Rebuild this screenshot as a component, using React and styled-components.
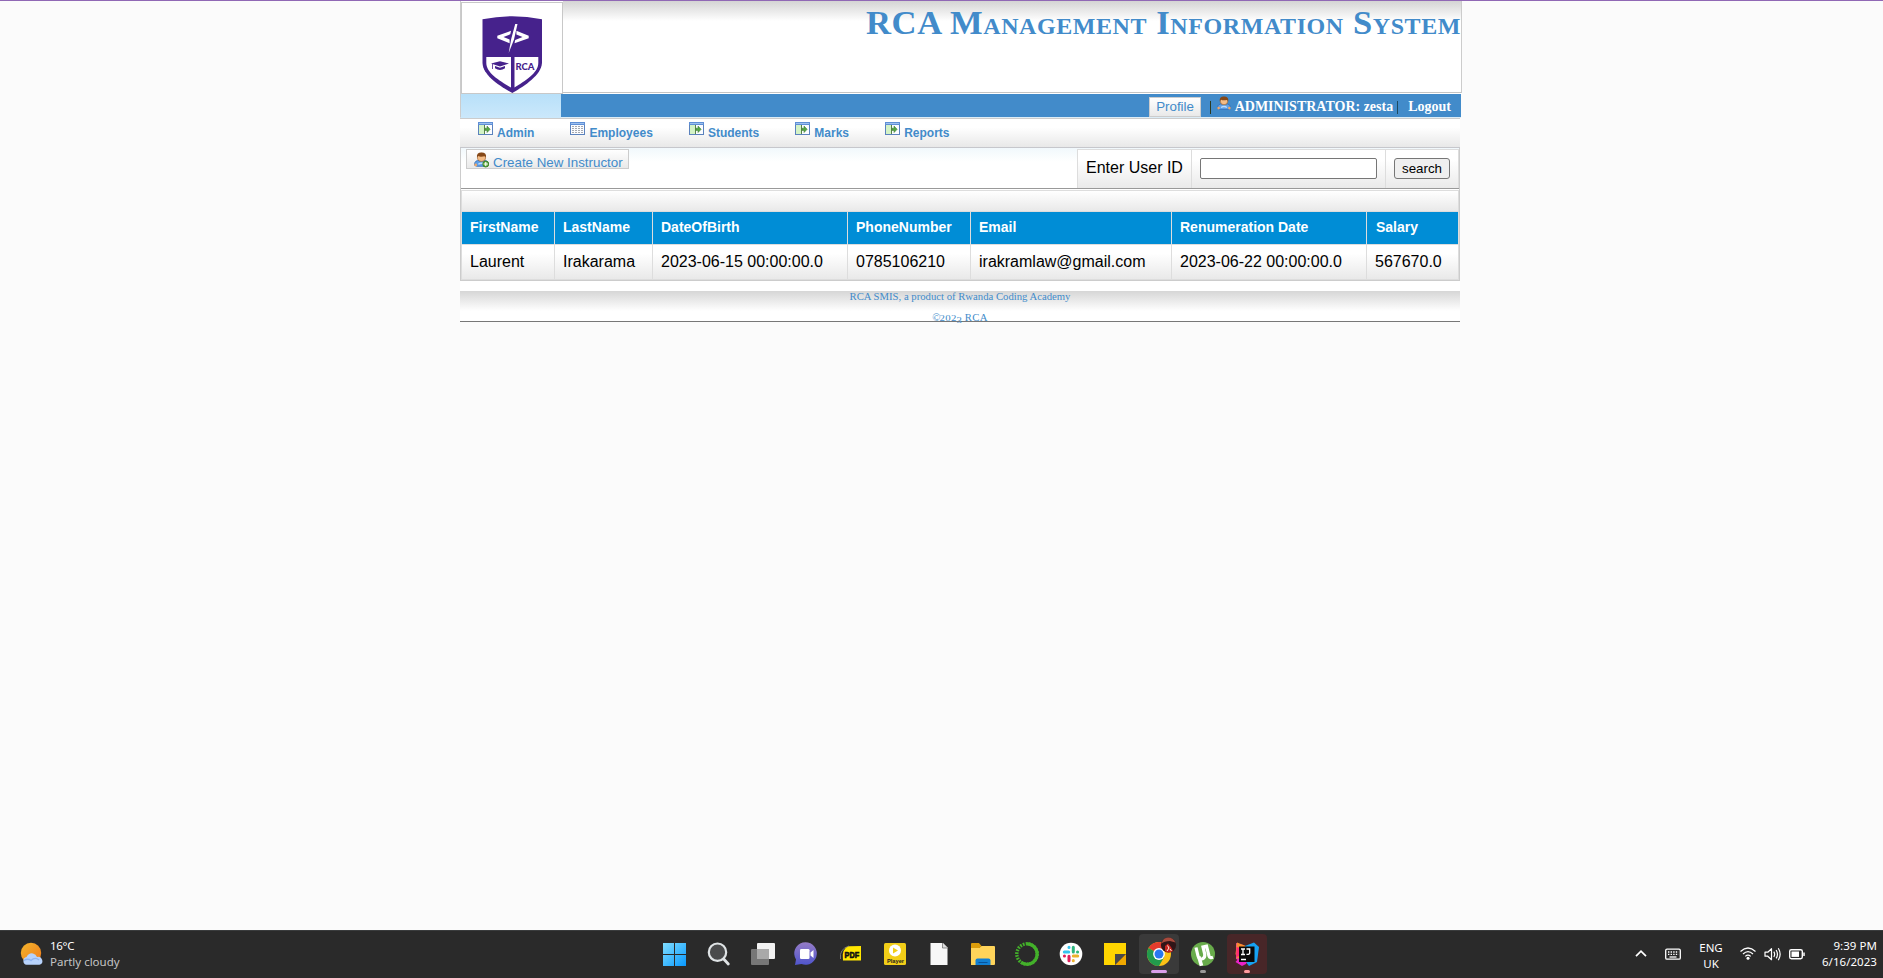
import React from "react";
import styled, { createGlobalStyle } from "styled-components";

const Global = createGlobalStyle`
  * { box-sizing: border-box; }
  html, body { margin: 0; padding: 0; }
  body { background: #fbfbfb; font-family: "Liberation Sans", Arial, sans-serif; overflow: hidden; }
`;

const Screen = styled.div`
  display: flex;
  flex-direction: column;
  height: 978px;
  width: 1883px;
  border-top: 1px solid #9068b5;
`;
const Page = styled.main`
  flex: 1;
  margin-left: 460px;
  width: 1002px;
`;

/* Header */
const Header = styled.header`
  display: flex;
  justify-content: space-between;
  height: 93px;
  border-left: 1px solid #ccc;
  background: #fff;
`;
const LogoBox = styled.div`
  width: 102px;
  height: 92px;
  margin-top: 1px;
  border: 1px solid #c8c8c8;
  background: #fff;
  svg { display: block; }
`;
const Banner = styled.div`
  flex: 1;
  height: 92px;
  border-right: 1px solid #ccc;
  border-bottom: 1px solid #c4c4c4;
  background: linear-gradient(#d4d4d4, #fff 20px);
  text-align: right;
`;
const Title = styled.h1`
  margin: 0;
  height: 42px;
  font: bold 34.6px/42px "Liberation Serif", "Times New Roman", serif;
  font-variant: small-caps;
  letter-spacing: 0.58px;
  color: #428bca;
  white-space: nowrap;
`;

/* User bar */
const UserBar = styled.div`
  display: flex;
  height: 24px;
  width: 1001px;
  border-left: 1px solid #ccc;
  border-bottom: 1px solid #dcecf6;
  background: #428bca;
`;
const UserBarAccent = styled.div`
  width: 100px;
  height: 24px;
  background: linear-gradient(#b8e0f9, #cbe8fb);
`;
const UserTools = styled.div`
  flex: 1;
  display: flex;
  height: 23px;
  width: 900px;
  padding-right: 10px;
  justify-content: flex-end;
  font: 14px/25px "Liberation Serif", "Times New Roman", serif;
  color: #222;
  > svg { margin-top: 2px; }
`;
const LinkButton = styled.a`
  display: flex;
  height: ${(p) => p.$h}px;
  width: ${(p) => p.$w}px;
  margin: ${(p) => p.$m};
  padding-left: ${(p) => p.$pl || 6}px;
  gap: 4px;
  border: 1px solid #ccc;
  background: linear-gradient(#fff, #e9e9e9);
  color: #428bca;
  font: 13.333px/17px "Liberation Sans", Arial, sans-serif;
  white-space: nowrap;
  svg { flex: none; margin-top: 2px; }
`;
const ButtonLabel = styled.span`
  padding-top: 4px;
`;
const Divider = styled.span`
  width: 1px;
  height: 13px;
  margin: ${(p) => p.$m};
  background: ${(p) => p.$c};
`;
const Bold = styled.b`
  color: #fff;
  white-space: nowrap;
`;

/* Navigation */
const Nav = styled.nav`
  display: flex;
  gap: 36.1px;
  width: 1000px;
  height: 30px;
  padding: 3px 0 0 18px;
  border-top: 1px solid #ccc;
  border-bottom: 1px solid #c6c7cc;
  background: linear-gradient(#fff 30%, #e8e8e8);
`;
const NavItem = styled.a`
  display: flex;
  gap: 4px;
  color: #428bca;
  font: bold 12px/22px "Liberation Sans", Arial, sans-serif;
`;

/* Content */
const Panel = styled.section`
  width: 1000px;
  height: 133px;
  border: solid #ccc;
  border-width: 0 1px 1px;
  background: #fff;
`;
const ActionRow = styled.div`
  display: flex;
  justify-content: space-between;
  height: 41px;
  padding: 1px 0 0 5px;
  border-bottom: 1px solid #999;
  background: linear-gradient(#f1f8fc, #fff 14px);
`;
const SearchTable = styled.form`
  display: flex;
  height: 39px;
  border: solid #ddd;
  border-width: 1px 1px 0;
  background: linear-gradient(#fff 25%, #eaeaea);
`;
const SearchCell = styled.div`
  width: ${(p) => p.$w}px;
  padding: 8px 0 0 8px;
  border-right: ${(p) => (p.$last ? 0 : 1)}px solid #ddd;
  font-size: 16px;
  line-height: 19px;
  white-space: nowrap;
`;
const Input = styled.input`
  display: block;
  width: 177px;
  height: 21px;
  border: 1px solid #767676;
  border-radius: 2px;
  background: #fff;
`;
const SearchButton = styled.button`
  display: block;
  width: 56px;
  height: 21px;
  padding: 0;
  border: 1px solid #767676;
  border-radius: 3px;
  background: #efefef;
  color: #000;
  font: 13.333px "Liberation Sans", Arial, sans-serif;
`;
const Table = styled.table`
  width: 998px;
  margin-top: 1px;
  table-layout: fixed;
  border-collapse: separate;
  border-spacing: 0;
  border: 1px solid #ddd;
`;
const Caption = styled.td`
  height: 21px;
  padding: 0;
  border-bottom: 1px solid #ddd;
  background: linear-gradient(#fff, #e9e9e9);
`;
const Th = styled.th`
  height: 33px;
  padding: 0 0 2px 8px;
  text-align: left;
  background: #008dd6;
  color: #fff;
  border-right: 1px solid #ddd;
  border-bottom: 1px solid #ddd;
  font: bold 14px/16px "Liberation Sans", Arial, sans-serif;
  &:last-child { border-right: 0; padding-left: 9px; }
`;
const Td = styled.td`
  height: 34px;
  padding: 0 0 0 8px;
  border-right: 1px solid #ddd;
  background: linear-gradient(#fff 25%, #e9e9e9);
  font-size: 16px;
  line-height: 18px;
  white-space: nowrap;
  &:last-child { border-right: 0; }
`;

const Footer = styled.footer`
  width: 1000px;
  height: 41px;
  padding-top: 9px;
  border-bottom: 1px solid #777;
  background: linear-gradient(#d6d6d6, #fff 20px) 0 10px / 100% 30px no-repeat #fff;
  color: #428bca;
  font: 10.7px/12px "Liberation Serif", Georgia, serif;
  text-align: center;
`;
const FooterLine = styled.p`
  margin: 0 0 9px;
  letter-spacing: ${(p) => p.$ls || 0}px;
`;
const OldStyle = styled.span`
  display: inline-block;
  font-size: 9px;
  line-height: 8px;
  vertical-align: ${(p) => p.$down || 0}px;
  transform: scaleX(1.2);
  margin: 0 0.5px;
`;

/* Taskbar */
const Taskbar = styled.div`
  display: flex;
  height: 48px;
  background: #2a2a2a;
  border-top: 1px solid #3a3c3d;
  font-family: "Noto Sans", "Open Sans", sans-serif;
  font-size: 11.5px;
  line-height: 16px;
  color: #fff;
`;
const Weather = styled.div`
  width: 652px;
  display: flex;
  padding: 7px 0 0 20px;
  gap: 6px;
`;
const WeatherText = styled.div`
  color: ${(p) => p.$c};
  letter-spacing: ${(p) => p.$ls || 0}px;
`;
const Apps = styled.div`
  display: flex;
  width: 618px;
  gap: 4px;
  padding: 3px 0 0 3px;
`;
const Tile = styled.div`
  width: 40px;
  height: 40px;
  border-radius: 4px;
  background: ${(p) => p.$bg || "transparent"};
  svg { display: block; }
`;
const Tray = styled.div`
  flex: 1;
  display: flex;
  padding-right: 6px;
  justify-content: flex-end;
`;
const TrayText = styled.div`
  width: ${(p) => p.$w}px;
  padding-top: ${(p) => p.$t}px;
  padding-right: ${(p) => p.$pr || 0}px;
  text-align: ${(p) => p.$align};
  letter-spacing: ${(p) => p.$ls || 0}px;
  white-space: nowrap;
`;

const Logo = () => (
  <svg width="100" height="90" viewBox="0 0 100 90">
    <path d="M20.5 16.3Q50 10 80 16.3V60C79 72 64 82 50.3 90C36 82 21 72 20.5 60Z" fill="#46228c" />
    <path d="M24.3 54H49V84.5C38 78 24.3 70 24.3 60Z M52.5 54H76.3V60C76.3 70 63 78 52.5 84.5Z" fill="#fff" />
    <path d="M49 27.8L35.3 32.8V35.2L47.6 40.3V36.6L41.5 34L48.3 31.3Z M54.4 27.8L66.7 32.8V35.2L52.5 40.3L53.2 36.9L60.5 34L54.4 31.4Z" fill="#fff" />
    <path d="M53.2 21H55.5L52 36.5L46.7 50L49.2 36Z" fill="#fff" />
    <path d="M29 60.6L38 58.2L47 60.6L38 63.5Z M33 63L38 64.8L43 63V65.3Q38 68.5 33 65.3Z" fill="#46228c" />
    <path d="M30.5 61V66" stroke="#46228c" strokeWidth=".8" />
    <text x="53.4" y="67" fontFamily="Lato" fontWeight="900" fontSize="10.2" fill="#46228c" textLength="19" lengthAdjust="spacingAndGlyphs">RCA</text>
  </svg>
);

const Person = ({ plus, w = 14 }) => (
  <svg width={w} height={w + 0.5} viewBox="0 0 14 14.5">
    <path d="M.6 12.5Q0 8.8 3.2 8H10.8Q14 8.8 13.4 12.5L11.5 13.4H2.5Z" fill="#5f9fe6" stroke="#2c69b5" strokeWidth=".7" />
    <circle cx="1.6" cy="12.1" r="1.3" fill="#f0a868" />
    <circle cx="12.4" cy="12.1" r="1.3" fill="#f0a868" />
    <path d="M4 11.5Q7 9.5 10 11.5" stroke="#b9dcff" strokeWidth="1.3" fill="none" />
    <circle cx="7" cy="5" r="3.8" fill="#f4bd88" stroke="#9a5a27" strokeWidth=".6" />
    <path d="M2.8 5.4Q2 .5 7 .5T11.2 5.4Q10.5 3.6 8.5 4.2Q5 4.6 4.3 3.8Q3.3 4 2.8 5.4Z" fill="#854818" />
    {plus && (
      <g>
        <circle cx="11" cy="11.3" r="2.8" fill="#65ad43" stroke="#2b7519" strokeWidth=".7" />
        <path d="M11 9.4V13.2M9.1 11.3H12.9" stroke="#fff" strokeWidth="1" />
      </g>
    )}
  </svg>
);

const NavIcon = ({ grid }) => (
  <svg width="15" height="13" viewBox="0 0 15 13">
    <rect x=".5" y=".5" width="14" height="12" fill="#fbfcff" stroke="#5b82bd" />
    <rect x="0" y="0" width="15" height="3" fill="#5f8fd6" />
    <path d="M1 1.5H14" stroke="#9dc0ee" />
    {grid ? (
      <path d="M2 4.5H13M2 6.5H13M2 8.5H13M2 10.5H13" stroke="#a5a9b0" strokeWidth="1" strokeDasharray="2 1" />
    ) : (
      <g>
        <rect x="1" y="3" width="5" height="9" fill="#d4f3c6" />
        <path d="M6.5 3V12" stroke="#58834a" />
        <path d="M7 6.2H9V4L12.2 7.3L9 10.6V8.4H7Z" fill="#56a645" stroke="#38792c" strokeWidth=".5" />
      </g>
    )}
  </svg>
);

const AppIcon = ({ children }) => (
  <svg width="40" height="40" viewBox="0 0 40 40">{children}</svg>
);

const ConeDots = () => (
  <circle cx="20" cy="20" r="10.2" fill="none" stroke="#43b02a" strokeWidth="3.4" strokeDasharray="1.8 1.1" />
);

const apps = [
  {
    icon: (
      <g>
        <defs>
          <linearGradient id="win" x1="8.5" y1="8.5" x2="31.5" y2="31.5" gradientUnits="userSpaceOnUse">
            <stop stopColor="#80deff" /><stop offset="1" stopColor="#0798ff" />
          </linearGradient>
        </defs>
        <path d="M8 9H19V20H8ZM20 9H31V20H20ZM8 21H19V32H8ZM20 21H31V32H20Z" fill="url(#win)" />
      </g>
    ),
  },
  {
    icon: (
      <g fill="none" stroke="#dfe3e5">
        <circle cx="18.5" cy="18.2" r="8.7" strokeWidth="2.2" fill="#4a4b4c" />
        <path d="M24.7 25L29.3 30" strokeWidth="2.8" strokeLinecap="round" />
      </g>
    ),
  },
  {
    icon: (
      <g>
        <rect x="14" y="9" width="18" height="16" rx="1" fill="#f2f2f2" />
        <rect x="8" y="15" width="18" height="16" rx="1" fill="#777" />
        <path d="M14 15H26V25H14Z" fill="#a9a9a9" />
      </g>
    ),
  },
  {
    icon: (
      <g>
        <defs>
          <linearGradient id="chat" x2="0" y2="1">
            <stop stopColor="#967cc6" /><stop offset="1" stopColor="#4f55cc" />
          </linearGradient>
        </defs>
        <path d="M8 31L9 25.5A11.3 11.3 0 1 1 14.5 30Z" fill="url(#chat)" />
        <rect x="13" y="15" width="9.5" height="10" rx="1.3" fill="#fff" />
        <path d="M23.5 18.5L26.5 16V24L23.5 21.5Z" fill="#fff" />
      </g>
    ),
  },
  {
    icon: (
      <g>
        <path d="M9.5 25Q8 15 18 12" stroke="#777" fill="none" strokeWidth="1" />
        <path d="M12 26.5Q10.5 14 18 12.3L30 12V26.5Z" fill="#ffe600" />
        <text x="13.6" y="23.8" fontFamily="Liberation Sans" fontSize="9.4" fontWeight="bold" fill="#111" stroke="#111" strokeWidth=".7" textLength="14.5" lengthAdjust="spacingAndGlyphs">PDF</text>
      </g>
    ),
  },
  {
    icon: (
      <g>
        <rect x="9" y="9" width="22" height="22" rx="1.5" fill="#f2ce18" />
        <circle cx="20" cy="16.5" r="6" fill="#fff" />
        <path d="M18 13.5V19.5L23 16.5Z" fill="#f2ce18" />
        <text x="12" y="28.5" fontFamily="Liberation Sans" fontSize="6" fontWeight="bold" fill="#222" textLength="17" lengthAdjust="spacingAndGlyphs">Player</text>
      </g>
    ),
  },
  { icon: <g><path d="M11.5 9H24L28.5 13.5V31H11.5Z" fill="#f7f7f7" /><path d="M23.5 9V14H28.5" fill="#ddd" stroke="#666" strokeWidth=".7" /></g> },
  {
    icon: (
      <g>
        <path d="M8 10Q8 9 9 9H16L18.5 12H8Z" fill="#dc9d0b" />
        <path d="M8 14H16L18.5 12H31Q32 12 32 13V30Q32 31 31 31H8Z" fill="#ffd45a" />
        <path d="M8 12H18.5L16.5 14H8Z" fill="#dc9d0b" />
        <path d="M12.5 31V26.5Q12.5 24.5 14.5 24.5H25.5Q27.5 24.5 27.5 26.5V31Z" fill="#117fd3" />
        <path d="M15.5 28.5H24.5" stroke="#07529b" strokeWidth="1" />
      </g>
    ),
  },
  {
    icon: (
      <g>
        <ConeDots />
        <path d="M20 9.8A10.2 10.2 0 1 1 14 28.3" fill="none" stroke="#43b02a" strokeWidth="3.2" />
      </g>
    ),
  },
  {
    icon: (
      <g>
        <circle cx="20" cy="20" r="11.3" fill="#fff" />
        <g fill="none" strokeWidth="3" strokeLinecap="round">
          <path d="M13.3 18H17.7M18 13.3V13.4" stroke="#36c5f0" />
          <path d="M22.3 13.3V18M26.5 18H26.6" stroke="#2eb67d" />
          <path d="M22.3 22H26.7M22.3 26.6V26.7" stroke="#ecb22e" />
          <path d="M18 22.2V26.7M13.4 22H13.5" stroke="#e01e5a" />
        </g>
      </g>
    ),
  },
  {
    icon: (
      <g>
        <path d="M9 9H31V20H20V31H9Z" fill="#ffd500" />
        <path d="M20 20H31L20 31Z" fill="#494949" />
        <path d="M31 20V31H20Z" fill="#f0a800" />
      </g>
    ),
  },
  {
    bg: "#3a3a3a",
    icon: (
      <g>
        <circle cx="20" cy="20" r="12" fill="#fbc116" />
        <path d="M20 20L9.6 14A12 12 0 0 1 30.4 14Z" fill="#e33b2e" />
        <path d="M9.6 14A12 12 0 0 0 20 32L25.2 23L20 20Z" fill="#229a4c" />
        <circle cx="20" cy="20" r="5.9" fill="#fff" />
        <circle cx="20" cy="20" r="4.5" fill="#2878ef" />
        <circle cx="29.5" cy="11" r="7.6" fill="#301518" />
        <path d="M22.5 9.5Q24 3.5 29 3.4T36.5 8.5L31 7Q25 7 22.5 9.5Z" fill="#a84a3c" />
        <path d="M26 12L29 9.5L32 13L34 17Q29 20 26 17Z" fill="#c52520" />
        <path d="M28.5 11.5L30 14L28 17M31 15L32.5 17" stroke="#fff0e5" strokeWidth="1" fill="none" />
        <rect x="12" y="36" width="16" height="3" rx="1.5" fill="#d99eea" />
      </g>
    ),
  },
  {
    icon: (
      <g>
        <circle cx="20" cy="20" r="12" fill="#68ab4b" />
        <path d="M13 13.5L15 22Q16 26 19.5 24.8Q22.3 23.6 21.7 20L20 13L23.5 12.2L26 22Q26.8 24.5 30 23.3" fill="none" stroke="#fff" strokeWidth="3.2" />
        <path d="M15.8 22.5L18.5 31.8" stroke="#fff" strokeWidth="3.6" />
        <rect x="17" y="36" width="6" height="3" rx="1.5" fill="#999" />
      </g>
    ),
  },
  {
    bg: "#482628",
    icon: (
      <g>
        <path d="M9 9L16 11L13 27L9 25Z" fill="#f04b8e" />
        <path d="M10 8.5L19 12L11 25L8.5 20Z" fill="#fb8c2e" />
        <path d="M18 12L27 8.5L32 13L30 28L22 32L18 27Z" fill="#16a2f3" />
        <path d="M12 24L21 25L19 30L15 32L8.5 28Z" fill="#eb22c8" />
        <path d="M9.5 13L13 14V22L9 23Z" fill="#ff2c75" />
        <rect x="12" y="12.5" width="15.5" height="15.5" fill="#090909" />
        <path d="M14 15H18M16 15V20.5M14 20.5H18M19.5 15H22.7V19Q22.7 20.7 19.5 20.4M14 25.5H19" stroke="#fff" strokeWidth="1.3" fill="none" />
        <rect x="17" y="36" width="6" height="3" rx="1.5" fill="#ff9a9f" />
      </g>
    ),
  },
];

const navItems = ["Admin", "Employees", "Students", "Marks", "Reports"];
const columns = [
  ["FirstName", "Laurent", 93],
  ["LastName", "Irakarama", 98],
  ["DateOfBirth", "2023-06-15 00:00:00.0", 195],
  ["PhoneNumber", "0785106210", 123],
  ["Email", "irakramlaw@gmail.com", 201],
  ["Renumeration Date", "2023-06-22 00:00:00.0", 195],
  ["Salary", "567670.0", 91],
];

const WeatherIcon = () => (
  <svg width="24" height="28" viewBox="0 0 24 28">
    <defs>
      <linearGradient id="sun" x2="1" y2="1"><stop stopColor="#f4b62c" /><stop offset="1" stopColor="#f07a1c" /></linearGradient>
    </defs>
    <circle cx="11" cy="15" r="10.2" fill="url(#sun)" />
    <path d="M6.5 26.8A4 4 0 0 1 6.5 19Q9 14.5 13 15.5Q16 16 17 19A3.9 3.9 0 0 1 19.5 26.8Z" fill="#b7d2fb" />
    <path d="M4 22.5Q8 20 11 22.5Q15 18.5 19 22" stroke="#8fb4f2" strokeWidth="1.3" fill="none" />
  </svg>
);

const TrayIcons = () => (
  <svg width="55" height="47" viewBox="0 0 55 47" fill="none" stroke="#fff" strokeWidth="1.3">
    <path d="M1 25.2L6 20.2L11 25.2" strokeWidth="1.7" />
    <rect x="30.7" y="18.2" width="14.6" height="10" rx="1.3" />
    <path d="M33 21H43.5M33 23.4H43.5" strokeDasharray="1.4 1.2" />
    <path d="M34.5 26H41.5" />
  </svg>
);
const StatusIcons = () => (
  <svg width="68" height="47" viewBox="0 0 68 47" fill="none" stroke="#fff" strokeWidth="1.2">
    <path d="M1.5 20.5Q9 13.5 16.5 20.5M4 23Q9 18.3 14 23M6.3 25.4Q9 23 11.7 25.4" />
    <circle cx="9" cy="27.3" r="1.5" fill="#fff" stroke="none" />
    <path d="M26 21.2H28.8L32.5 17.7V28.7L28.8 25.2H26Z" strokeLinejoin="round" />
    <path d="M34.8 20.6Q36.5 23.2 34.8 25.8M37.1 19Q39.8 23.2 37.1 27.4M39.3 17.3Q43 23.2 39.3 29.1" />
    <rect x="50.7" y="18.7" width="12.6" height="9" rx="1.6" strokeWidth="1.4" />
    <rect x="52.5" y="20.5" width="7.5" height="5.4" fill="#fff" stroke="none" />
    <path d="M65 21.5V25" strokeWidth="1.5" />
  </svg>
);

export default function App() {
  return (
    <Screen>
      <Global />
      <Page>
        <Header>
          <LogoBox><Logo /></LogoBox>
          <Banner><Title>RCA Management Information System</Title></Banner>
        </Header>
        <UserBar>
          <UserBarAccent />
          <UserTools>
            <LinkButton $w={52} $h={20} $m="3px 9px 0 0">Profile</LinkButton>
            <Divider $m="7px 6px 0 0" $c="#2c3a20" />
            <Person />
            <Bold>&nbsp;ADMINISTRATOR: zesta</Bold>
            <Divider $m="7px 10px 0 4px" $c="#1d4a60" />
            <Bold>Logout</Bold>
          </UserTools>
        </UserBar>
        <Nav>
          {navItems.map((n) => (
            <NavItem key={n}><NavIcon grid={n === "Employees"} />{n}</NavItem>
          ))}
        </Nav>
        <Panel>
          <ActionRow>
            <LinkButton $w={163} $h={20} $m="0" $pl={7}><Person plus w={15} /><ButtonLabel>Create New Instructor</ButtonLabel></LinkButton>
            <SearchTable onSubmit={(e) => e.preventDefault()}>
              <SearchCell $w={114}>Enter User ID</SearchCell>
              <SearchCell $w={194}><Input /></SearchCell>
              <SearchCell $w={72} $last><SearchButton>search</SearchButton></SearchCell>
            </SearchTable>
          </ActionRow>
          <Table>
            <colgroup>{columns.map((c) => <col key={c[0]} width={c[2]} />)}</colgroup>
            <tbody>
              <tr><Caption colSpan={7} /></tr>
              <tr>{columns.map((c) => <Th key={c[0]}>{c[0]}</Th>)}</tr>
              <tr>{columns.map((c) => <Td key={c[0]}>{c[1]}</Td>)}</tr>
            </tbody>
          </Table>
        </Panel>
        <Footer>
          <FooterLine>RCA SMIS, a product of Rwanda Coding Academy</FooterLine>
          <FooterLine $ls={0.3}>©<OldStyle>202</OldStyle><OldStyle $down={-2}>3</OldStyle> RCA</FooterLine>
        </Footer>
      </Page>
      <Taskbar>
        <Weather>
          <WeatherIcon />
          <div>
            <WeatherText $c="#fff" $ls={-0.3}>16°C</WeatherText>
            <WeatherText $c="#c4c4c4">Partly cloudy</WeatherText>
          </div>
        </Weather>
        <Apps>
          {apps.map((a, i) => <Tile key={i} $bg={a.bg}><AppIcon>{a.icon}</AppIcon></Tile>)}
        </Apps>
        <Tray>
          <TrayIcons />
          <TrayText $w={49} $pr={7} $t={9} $align="center">ENG<br />UK</TrayText>
          <StatusIcons />
          <TrayText $w={70} $t={7} $align="right" $ls={0.05}>9:39 PM<br />6/16/2023</TrayText>
        </Tray>
      </Taskbar>
    </Screen>
  );
}
